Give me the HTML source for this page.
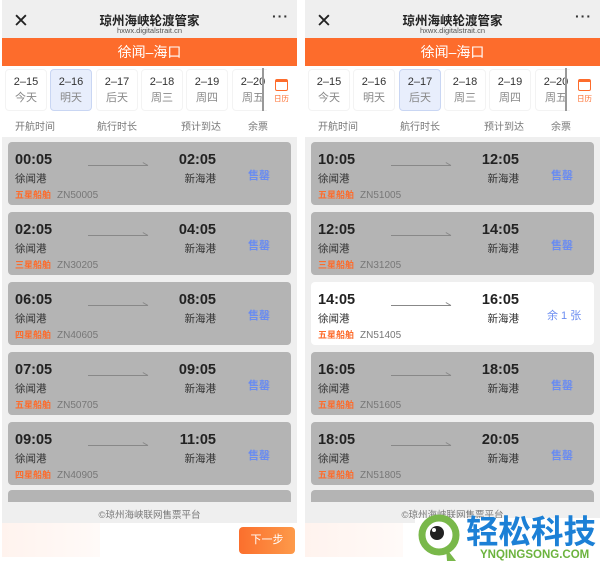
<!DOCTYPE html>
<html><head><meta charset="utf-8"><style>
*{margin:0;padding:0;box-sizing:border-box}
body{width:600px;height:563px;background:#fff;position:relative;overflow:hidden;font-family:"Liberation Sans","Noto Sans CJK SC",sans-serif;color:#333}
.p{position:absolute;top:0;width:295px;height:557px;background:#efefef;overflow:hidden}
.a{position:absolute;white-space:nowrap}
.hd{position:absolute;left:0;top:0;width:100%;height:38px;background:#efefef}
.or{position:absolute;left:0;top:38px;width:100%;height:28px;background:#fd6c2c;color:#fff;font-size:14px;text-align:center;line-height:28px}
.dt{position:absolute;top:66px;left:0;width:100%;height:47px;background:#fff}
.dc{position:absolute;top:3px;width:42px;height:42px;border:1px solid #f3f3f3;border-radius:4px;text-align:center;font-size:11px;line-height:16px;padding-top:4px;color:#333}
.dc span{color:#888;display:block}
.dc.s{background:#e8eefc;border-color:#c9d6f3}
.ch{position:absolute;top:113px;left:0;width:100%;height:24px;background:#fff;font-size:10px;color:#777}
.cd{position:absolute;left:6px;width:283px;height:63px;background:#b4b4b4;border-radius:4px}
.cd.w{background:#fff}
.t{position:absolute;top:10px;font-size:14.5px;font-weight:bold;color:#222}
.st{position:absolute;top:29px;font-size:10.5px;color:#333}
.co{position:absolute;top:47px;font-size:9px;line-height:13px;color:#fd6c2c;left:7px;font-weight:bold}
.zn{position:absolute;top:47px;font-size:10px;line-height:13px;color:#777;left:49px}
.ln{position:absolute;left:80px;top:23px;width:60px;height:1px;background:#888}
.ln:after{content:"";position:absolute;right:0;top:0;width:6px;height:1px;background:#888;transform:rotate(30deg);transform-origin:right}
.sq{position:absolute;left:240px;top:25px;font-size:11px;color:#6a8cf0;font-weight:bold}
.ft{position:absolute;top:507px;width:100%;text-align:center;font-size:9.5px;color:#777}
</style></head><body>

<div class="p" style="left:2px">
<div class="hd"></div>
<div class="a" style="left:11px;top:10px;font-size:19px;color:#222">✕</div>
<div class="a" style="left:0;width:100%;text-align:center;top:10px;font-size:12.5px;font-weight:bold;color:#222">琼州海峡轮渡管家</div>
<div class="a" style="left:0;width:100%;text-align:center;top:26px;font-size:7.5px;color:#555">hxwx.digitalstrait.cn</div>
<div class="a" style="left:270px;top:8px;font-size:14px;font-weight:bold;letter-spacing:1px">···</div>
<div class="or">徐闻–海口</div>
<div class="dt">
<div class="dc" style="left:3px">2–15<span>今天</span></div>
<div class="dc s" style="left:48px">2–16<span>明天</span></div>
<div class="dc" style="left:94px">2–17<span>后天</span></div>
<div class="dc" style="left:139px">2–18<span>周三</span></div>
<div class="dc" style="left:184px">2–19<span>周四</span></div>
<div class="dc" style="left:230px">2–20<span>周五</span></div>
<div style="position:absolute;left:260px;top:2px;width:2px;height:43px;background:#999"></div>
<div style="position:absolute;left:265px;top:2px;width:30px;height:43px;background:#fff"></div>
<div style="position:absolute;left:273px;top:13px;width:13px;height:12px;border:1.5px solid #fd6c2c;border-radius:2px;border-top-width:3px"></div>
<div class="a" style="left:272px;top:27px;font-size:7.5px;color:#fd6c2c">日历</div>
</div>
<div class="ch"><span class="a" style="left:13px;top:5px">开航时间</span><span class="a" style="left:95px;top:5px">航行时长</span><span class="a" style="left:179px;top:5px">预计到达</span><span class="a" style="left:246px;top:5px">余票</span></div>

<div class="cd" style="top:142px"><div class="t" style="left:7px">00:05</div><div class="ln"></div><div class="t" style="right:75px">02:05</div><div class="st" style="left:7px">徐闻港</div><div class="st" style="right:75px">新海港</div><div class="sq">售罄</div><div class="co">五星船舶</div><div class="zn">ZN50005</div></div>
<div class="cd" style="top:212px"><div class="t" style="left:7px">02:05</div><div class="ln"></div><div class="t" style="right:75px">04:05</div><div class="st" style="left:7px">徐闻港</div><div class="st" style="right:75px">新海港</div><div class="sq">售罄</div><div class="co">三星船舶</div><div class="zn">ZN30205</div></div>
<div class="cd" style="top:282px"><div class="t" style="left:7px">06:05</div><div class="ln"></div><div class="t" style="right:75px">08:05</div><div class="st" style="left:7px">徐闻港</div><div class="st" style="right:75px">新海港</div><div class="sq">售罄</div><div class="co">四星船舶</div><div class="zn">ZN40605</div></div>
<div class="cd" style="top:352px"><div class="t" style="left:7px">07:05</div><div class="ln"></div><div class="t" style="right:75px">09:05</div><div class="st" style="left:7px">徐闻港</div><div class="st" style="right:75px">新海港</div><div class="sq">售罄</div><div class="co">五星船舶</div><div class="zn">ZN50705</div></div>
<div class="cd" style="top:422px"><div class="t" style="left:7px">09:05</div><div class="ln"></div><div class="t" style="right:75px">11:05</div><div class="st" style="left:7px">徐闻港</div><div class="st" style="right:75px">新海港</div><div class="sq">售罄</div><div class="co">四星船舶</div><div class="zn">ZN40905</div></div>
<div class="cd" style="top:490px;height:12px;border-radius:4px 4px 0 0"></div>
<div class="ft">©琼州海峡联网售票平台</div>
<div style="position:absolute;left:0;top:523px;width:100%;height:34px;background:#fff"></div>
<div style="position:absolute;left:0;top:523px;width:98px;height:34px;background:linear-gradient(90deg,#fff3ee,#fffaf8)"></div>
<div style="position:absolute;left:237px;top:527px;width:56px;height:27px;border-radius:4px;background:linear-gradient(90deg,#fb6f2d,#fd9a4a);color:#fff;font-size:11px;text-align:center;line-height:27px">下一步</div>
</div>

<div class="p" style="left:305px">
<div class="hd"></div>
<div class="a" style="left:11px;top:10px;font-size:19px;color:#222">✕</div>
<div class="a" style="left:0;width:100%;text-align:center;top:10px;font-size:12.5px;font-weight:bold;color:#222">琼州海峡轮渡管家</div>
<div class="a" style="left:0;width:100%;text-align:center;top:26px;font-size:7.5px;color:#555">hxwx.digitalstrait.cn</div>
<div class="a" style="left:270px;top:8px;font-size:14px;font-weight:bold;letter-spacing:1px">···</div>
<div class="or">徐闻–海口</div>
<div class="dt">
<div class="dc" style="left:3px">2–15<span>今天</span></div>
<div class="dc" style="left:48px">2–16<span>明天</span></div>
<div class="dc s" style="left:94px">2–17<span>后天</span></div>
<div class="dc" style="left:139px">2–18<span>周三</span></div>
<div class="dc" style="left:184px">2–19<span>周四</span></div>
<div class="dc" style="left:230px">2–20<span>周五</span></div>
<div style="position:absolute;left:260px;top:2px;width:2px;height:43px;background:#999"></div>
<div style="position:absolute;left:265px;top:2px;width:30px;height:43px;background:#fff"></div>
<div style="position:absolute;left:273px;top:13px;width:13px;height:12px;border:1.5px solid #fd6c2c;border-radius:2px;border-top-width:3px"></div>
<div class="a" style="left:272px;top:27px;font-size:7.5px;color:#fd6c2c">日历</div>
</div>
<div class="ch"><span class="a" style="left:13px;top:5px">开航时间</span><span class="a" style="left:95px;top:5px">航行时长</span><span class="a" style="left:179px;top:5px">预计到达</span><span class="a" style="left:246px;top:5px">余票</span></div>

<div class="cd" style="top:142px"><div class="t" style="left:7px">10:05</div><div class="ln"></div><div class="t" style="right:75px">12:05</div><div class="st" style="left:7px">徐闻港</div><div class="st" style="right:75px">新海港</div><div class="sq">售罄</div><div class="co">五星船舶</div><div class="zn">ZN51005</div></div>
<div class="cd" style="top:212px"><div class="t" style="left:7px">12:05</div><div class="ln"></div><div class="t" style="right:75px">14:05</div><div class="st" style="left:7px">徐闻港</div><div class="st" style="right:75px">新海港</div><div class="sq">售罄</div><div class="co">三星船舶</div><div class="zn">ZN31205</div></div>
<div class="cd w" style="top:282px"><div class="t" style="left:7px">14:05</div><div class="ln"></div><div class="t" style="right:75px">16:05</div><div class="st" style="left:7px">徐闻港</div><div class="st" style="right:75px">新海港</div><div class="sq" style="left:236px;font-weight:normal">余 1 张</div><div class="co">五星船舶</div><div class="zn">ZN51405</div></div>
<div class="cd" style="top:352px"><div class="t" style="left:7px">16:05</div><div class="ln"></div><div class="t" style="right:75px">18:05</div><div class="st" style="left:7px">徐闻港</div><div class="st" style="right:75px">新海港</div><div class="sq">售罄</div><div class="co">五星船舶</div><div class="zn">ZN51605</div></div>
<div class="cd" style="top:422px"><div class="t" style="left:7px">18:05</div><div class="ln"></div><div class="t" style="right:75px">20:05</div><div class="st" style="left:7px">徐闻港</div><div class="st" style="right:75px">新海港</div><div class="sq">售罄</div><div class="co">五星船舶</div><div class="zn">ZN51805</div></div>
<div class="cd" style="top:490px;height:12px;border-radius:4px 4px 0 0"></div>
<div class="ft">©琼州海峡联网售票平台</div>
<div style="position:absolute;left:0;top:523px;width:100%;height:34px;background:#fff"></div>
<div style="position:absolute;left:0;top:523px;width:98px;height:34px;background:linear-gradient(90deg,#fff3ee,#fffaf8)"></div>
</div>

<div style="position:absolute;left:415px;top:518px;width:185px;height:45px;background:#fff"></div>
<svg style="position:absolute;left:416px;top:514px" width="48" height="49" viewBox="0 0 48 49">
<circle cx="23" cy="21" r="17" fill="none" stroke="#79b84a" stroke-width="7"/>
<path d="M30 34 L40 47 L31 47 Z" fill="#79b84a"/>
<circle cx="21" cy="19" r="7" fill="#222"/>
<circle cx="18" cy="16" r="2" fill="#fff"/>
</svg>
<div class="a" style="left:466px;top:516px;font-size:32.5px;line-height:33px;font-weight:bold;color:#1c80d6">轻松科技</div>
<div class="a" style="left:480px;top:549px;font-size:11.5px;line-height:13px;font-weight:bold;color:#6cb33e">YNQINGSONG.COM</div>
</body></html>
